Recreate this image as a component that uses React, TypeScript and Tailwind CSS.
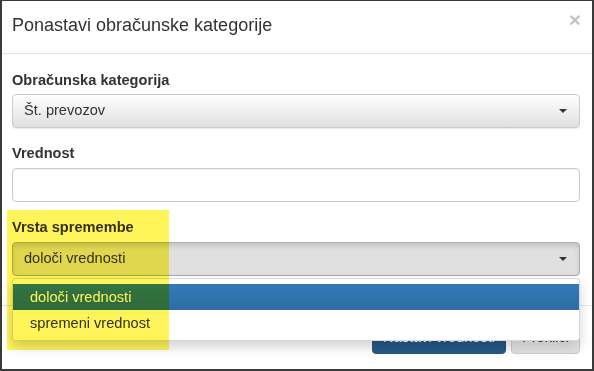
export default function App() {
  return (
    <div
      className="relative w-[594px] h-[371px] overflow-hidden bg-white border-[#3a3a3a] border-t border-l-2 border-r-2 border-b-2 text-[#333] text-[14.6px]"
      style={{ fontFamily: '"Liberation Sans", Arial, sans-serif' }}
    >
      {/* header */}
      <div className="flex items-start justify-between h-[53px] border-b border-[#e5e5e5] pl-[10px] pr-[12px] pt-[11px]">
        <h4 className="text-[18px] leading-[26px]">Ponastavi obračunske kategorije</h4>
        <span className="text-[21px] font-bold leading-[21px] text-[#c4c4c4] mt-[-3px] mr-[-1px]">×</span>
      </div>

      {/* body */}
      <div className="pl-[10px] pr-[12px] pt-[16px] pb-[15px]">
        <div className="mb-[15px]">
          <label className="block font-bold leading-5 mb-[4px]">Obračunska kategorija</label>
          <div className="flex items-center justify-between h-[34px] rounded border border-[#ccc] bg-linear-to-b from-white to-[#e0e0e0] pl-[11px] pr-[12px] shadow-[0_1px_1px_rgba(0,0,0,0.075)]">
            <span>Št. prevozov</span>
            <Caret />
          </div>
        </div>

        <div className="mb-[15px]">
          <label className="block font-bold leading-5 mb-[5px]">Vrednost</label>
          <div className="h-[34px] rounded border border-[#ccc] bg-white shadow-[inset_0_1px_1px_rgba(0,0,0,0.075)]" />
        </div>

        <div className="relative">
          <label className="block font-bold leading-5 mb-[5px]">Vrsta spremembe</label>
          <div className="flex items-center justify-between h-[34px] rounded border border-[#adadad] bg-[#e0e0e0] pl-[11px] pr-[12px] shadow-[inset_0_3px_5px_rgba(0,0,0,0.125)]">
            <span>določi vrednosti</span>
            <Caret />
          </div>

          {/* open dropdown menu */}
          <div className="absolute left-0 right-0 top-[61px] z-10 rounded border border-[rgba(0,0,0,0.15)] bg-white pt-[5px] pb-[4px] shadow-[0_6px_12px_rgba(0,0,0,0.175)]">
            <div className="h-[26px] leading-[26px] pl-[17px] text-white bg-linear-to-b from-[#337ab7] to-[#2e6da4]">
              določi vrednosti
            </div>
            <div className="h-[26px] leading-[26px] pl-[17px]">spremeni vrednost</div>
          </div>
        </div>
        <div className="h-[14px]" />
      </div>

      {/* footer */}
      <div className="flex justify-end gap-[5px] border-t border-[#e5e5e5] pl-[10px] pr-[12px] pt-[14px]">
        <button className="h-[34px] px-[10px] pt-[2px] rounded border border-[#245580] bg-[#265a88] text-white">
          Nastavi vrednosti
        </button>
        <button className="h-[34px] px-[10px] pt-[2px] rounded border border-[#ccc] bg-linear-to-b from-white to-[#e0e0e0] text-[#333]">
          Prekliči
        </button>
      </div>

      {/* yellow highlighter mark */}
      <div className="absolute left-[5px] top-[209px] w-[162px] h-[140px] z-20 bg-[#fff55a] mix-blend-multiply" />
    </div>
  )
}

function Caret() {
  return (
    <svg width="8" height="4" viewBox="0 0 8 4">
      <path d="M0 0h8L4 4z" fill="#333" />
    </svg>
  )
}
